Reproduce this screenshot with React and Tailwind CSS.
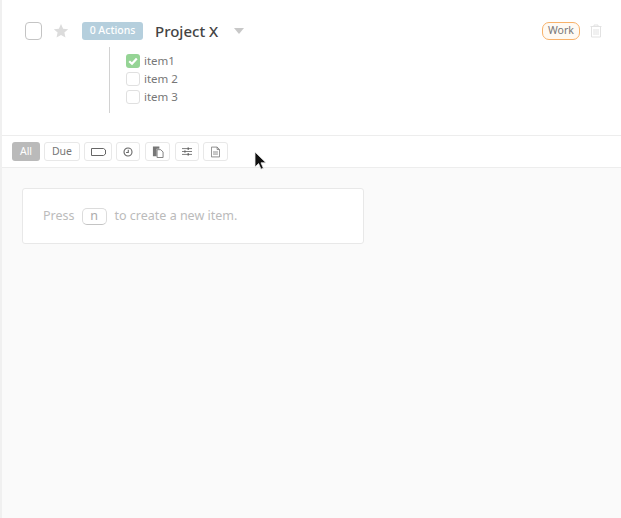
import React from "react";

const font = { fontFamily: '"Noto Sans", "Open Sans", sans-serif' };

const ToolButton = ({ className = "", children }) => (
  <div className={`flex h-[19px] items-center justify-center rounded-[3px] border border-[#e8e8e8] bg-white text-[10.5px] text-[#777] ${className}`}>
    {children}
  </div>
);

const TodoItem = ({ label, checked }) => (
  <div className="flex h-[18px] items-center gap-[4px]">
    {checked ? (
      <div className="flex h-[14px] w-[14px] items-center justify-center rounded-[3px] bg-[#95d495]">
        <svg width="10" height="10" viewBox="0 0 10 10" fill="none">
          <path d="M1.2 5.2 L4 7.8 L8.8 2.4" stroke="#fff" strokeWidth="2.2" />
        </svg>
      </div>
    ) : (
      <div className="h-[14px] w-[14px] rounded-[3px] border border-[#e0e0e0] bg-white" />
    )}
    <span className="text-[11.5px] leading-none text-[#777]">{label}</span>
  </div>
);

export default function App() {
  return (
    <div style={font} className="relative flex h-[518px] w-[621px] flex-col overflow-hidden border-l-2 border-[#f0f0f0] bg-[#fafafa]">
      {/* project header */}
      <div className="h-[136px] shrink-0 border-b border-[#ededed] bg-white">
        <div className="flex h-[40px] items-center pl-[23px] pr-[19px] pt-[22px]">
          <div className="h-[18px] w-[17px] rounded-[4px] border border-[#c4c4c4] bg-white" />
          <svg className="ml-[11px]" width="16" height="16" viewBox="0 0 24 24" fill="#dcdcdc">
            <path d="M12 1.5l3.2 7 7.6.8-5.7 5.1 1.6 7.5L12 18.1l-6.7 3.8 1.6-7.5L1.2 9.3l7.6-.8z" />
          </svg>
          <div className="ml-[13px] flex h-[18px] w-[61px] items-center justify-center rounded-[3px] bg-[#b5cfdd] text-[10.5px] font-medium text-white">
            0 Actions
          </div>
          <span className="ml-[12px] text-[15px] leading-[18px] font-medium text-[#444]">Project X</span>
          <svg className="ml-[16px]" width="10" height="6" viewBox="0 0 10 6" fill="#c8c8c8">
            <path d="M0 0h10L5 6z" />
          </svg>
          <div className="ml-auto flex h-[18px] w-[38px] items-center justify-center rounded-[7px] border border-[#f8b26a] bg-[#fffaf3] text-[10.5px] text-[#777]">
            Work
          </div>
          <svg className="ml-[10px]" width="12" height="14" viewBox="0 0 12 14" fill="none" stroke="#e2e2e2">
            <path d="M0.5 2.5h11M4 2.5V1h4v1.5M1.5 2.5v10.5h9V2.5M4 5v6M6 5v6M8 5v6" />
          </svg>
        </div>
        <div className="ml-[107px] mt-[7px] flex h-[66px] flex-col border-l border-[#d2d2d2] pl-[16px] pt-[5px]">
          <TodoItem label="item1" checked />
          <TodoItem label="item 2" />
          <TodoItem label="item 3" />
        </div>
      </div>

      {/* filter toolbar */}
      <div className="flex h-[32px] shrink-0 items-start gap-[4px] border-b border-[#ededed] bg-white pl-[10px] pt-[6px]">
        <div className="flex h-[19px] w-[28px] items-center justify-center rounded-[3px] bg-[#bababa] text-[10.5px] text-white">All</div>
        <ToolButton className="w-[36px]">Due</ToolButton>
        <ToolButton className="w-[28px]">
          <svg width="15" height="8" viewBox="0 0 15 8" fill="none" stroke="#666">
            <path d="M0.5 0.5h12l2 1.5v4l-2 1.5h-12z" />
          </svg>
        </ToolButton>
        <ToolButton className="w-[24px]">
          <svg width="10" height="10" viewBox="0 0 11 11" fill="none" stroke="#666" strokeWidth="1.2">
            <circle cx="5.5" cy="5.5" r="4.4" />
            <path d="M5.8 3v3H3.4" />
          </svg>
        </ToolButton>
        <ToolButton className="ml-[1px] w-[25px]">
          <svg width="12" height="12" viewBox="0 0 13 13">
            <path d="M1 0.5h7v2.5h-3v8H1z" fill="#777" />
            <path d="M5.5 4h4l2.5 2.5v6H5.5z" fill="#fff" stroke="#777" />
          </svg>
        </ToolButton>
        <ToolButton className="ml-[1px] w-[24px]">
          <svg width="10" height="9" viewBox="0 0 12 10" fill="none" stroke="#666">
            <path d="M0 1.5h12M0 5h12M0 8.5h12" />
            <path d="M7.5 0.2v2.6M3.5 3.7v2.6M7.5 7.2v2.6" strokeWidth="1.8" />
          </svg>
        </ToolButton>
        <ToolButton className="w-[25px]">
          <svg width="9" height="12" viewBox="0 0 11 13" fill="none" stroke="#777">
            <path d="M0.5 0.5h7l3 3v9h-10z" />
            <path d="M7.5 0.5v3h3M2.5 6.5h6M2.5 9h6" />
          </svg>
        </ToolButton>
      </div>

      {/* empty state */}
      <div className="pl-[20px] pt-[20px]">
        <div className="flex h-[56px] w-[342px] items-center rounded-[3px] border border-[#e8e8e8] bg-white pl-[20px] text-[12.5px] text-[#bbb]">
          <span>Press</span>
          <span className="ml-[7px] flex h-[17px] w-[25px] items-center justify-center rounded-[5px] border border-[#dcdcdc] border-b-[#c4c4c4] text-[#aaa]">n</span>
          <span className="ml-[8px]">to create a new item.</span>
        </div>
      </div>

      {/* mouse cursor */}
      <svg className="absolute left-[252px] top-[151px]" width="14" height="22" viewBox="0 0 14 22">
        <path d="M1 1v15l3.6-3.4 2.4 5.6 2.4-1-2.4-5.4h5z" fill="#111" stroke="#eee" strokeWidth="0.8" />
      </svg>
    </div>
  );
}
